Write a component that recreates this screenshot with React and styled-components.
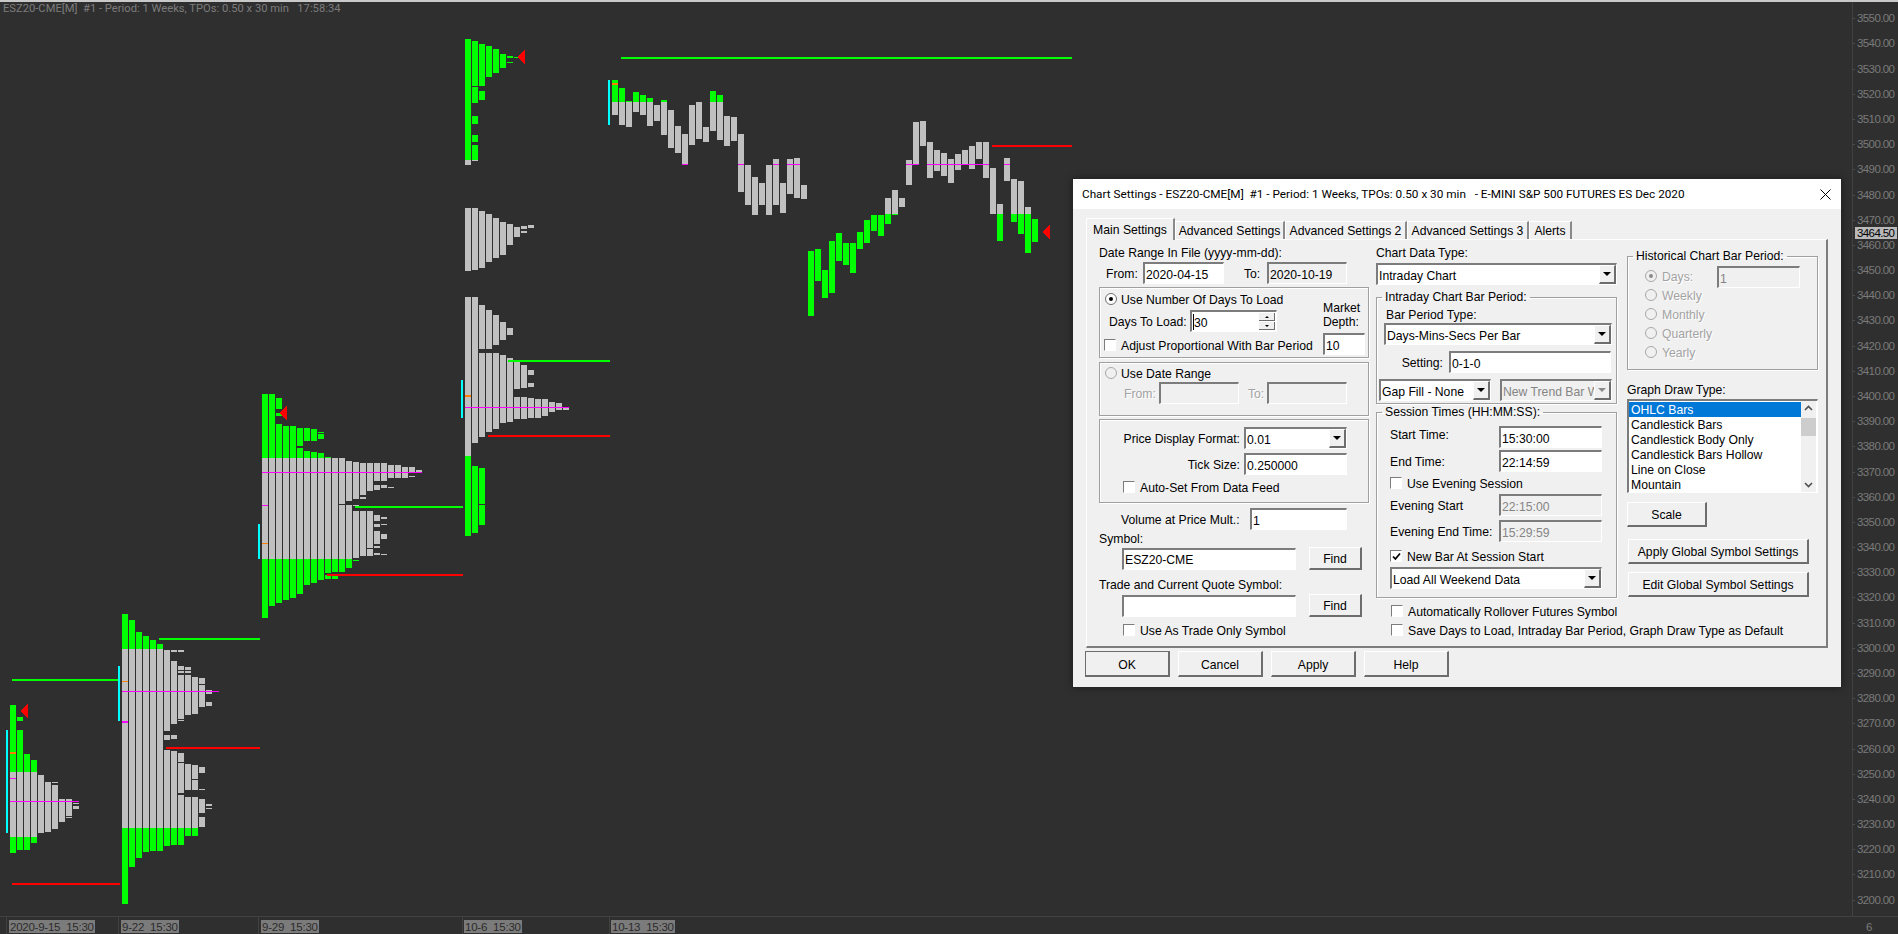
import React from "react";
import styled, { createGlobalStyle } from "styled-components";

const GlobalStyle = createGlobalStyle`
  html, body { margin: 0; padding: 0; background: #2f2f2f; overflow: hidden; }
  * { box-sizing: border-box; }
`;

const UI_FONT = `"Liberation Sans", Arial, sans-serif`;
const COLORS = { g: "#00ff00", s: "#c0c0c0" };

const parseCols = (x0, oy, cols, div = 3) =>
  cols.flatMap((col, i) =>
    col
      .split(" ")
      .filter(Boolean)
      .map((s) => {
        const m = s.match(/([gs])(-?[\d.]+)-(-?[\d.]+)/);
        const a = Math.round(oy + Number(m[2]) / div);
        const b = Math.round(oy + Number(m[3]) / div);
        return { x: x0 + i * 7, y: a, h: Math.max(b - a, 1), c: COLORS[m[1]] };
      })
  );

const bars = [
  ...parseCols(10, 660, [
    "g135-335 s335-531 g531-579",
    "g171-183 g210-335 s335-531 g531-570",
    "g282-335 s335-531 g531-570",
    "g300-335 s335-531 g531-549",
    "s345-519",
    "s366-516",
    "s366-369 s375-507",
    "s417-486",
    "s417-468 s471-474",
    "s429-432 s438-447",
  ]),
  ...parseCols(122, 660, [
    "g-138--33 s-33-504 g504-732",
    "g-120--33 s-33-504 g504-621",
    "g-84--33 s-33-504 g504-594",
    "g-72--33 s-33-504 g504-576",
    "g-60--33 s-33-504 g504-573",
    "g-48--33 s-33-504 g504-573",
    "s-30-213 s225-240 s270-504 g504-558",
    "s-30--24 s3-192 s225-237 s273-504 g504-555",
    "s-30--24 s18-30 s33-39 s45-177 s180-183 s279-306 s309-399 s405-504 g504-555",
    "s21-30 s33-39 s45-165 s312-390 s411-504 g504-528",
    "s51-162 s315-357 s360-390 s411-504 g504-528",
    "s54-72 s75-141 s321-339 s387-390 s417-459 s471-501",
    "s90-102 s126-138 s432-438 s444-447",
  ]),
  ...parseCols(262, 380, [
    "g42-234 s234-537 g537-714",
    "g42-234 s234-537 g537-678",
    "g54-87 g99-108 g132-234 s234-537 g537-669",
    "g138-234 s234-537 g537-660",
    "g138-234 s234-537 g537-654",
    "g144-198 g204-234 s234-537 g537-642",
    "g144-183 g213-234 s234-537 g537-615",
    "g147-183 g216-234 s234-537 g537-609",
    "g156-159 g162-177 g219-234 s234-537 g537-600",
    "g231-234 s234-537 g537-579 g585-597",
    "s234-537 g537-576 g585-597",
    "s234-372 s375-537 g537-576",
    "s243-363 s375-537 g537-564",
    "s246-357 s375-378 s393-534 g540-543",
    "s249-345 s351-357 s393-528",
    "s249-333 s393-504 s507-528",
    "s249-303 s315-330 s405-423 s432-441 s453-492 s498-504 s519-525",
    "s249-303 s315-324 s411-417 s432-435 s462-477 s522-525",
    "s255-294 s321-324",
    "s255-294",
    "s261-294",
    "s261-279 s288-291",
    "s270-279",
  ]),
  ...parseCols(465, 20, [
    "g57-420 s420-435",
    "g63-198 g201-249 g288-312 g345-366 g375-420 s420-423",
    "g72-198 g213-240",
    "g78-171",
    "g87-159",
    "g102-144",
    "g108-114 g126-129",
    "g111-114",
  ]),
  ...parseCols(465, 0, [
    "s208-271", "s208-270", "s211-268", "s214-262", "s218-258", "s222-255", "s224-245", "s227-237", "s226-229 s231-233", "s225-228",
  ], 1),
  ...parseCols(465, 0, [
    "s297-456 g456-536",
    "s297-443 g466-533",
    "s305-349 s353-437 g468-504 g505-525",
    "s310-349 s353-432",
    "s315-345 s353-429",
    "s322-340 s355-423",
    "s328-335 s358-422",
    "s360-389 s397-419",
    "s365-388 s397-419",
    "s370-375 s383-387 s398-418",
    "s399-418",
    "s399-416",
    "s402-412",
    "s403-410",
    "s407-410",
  ], 1),
  ...parseCols(612, 20, [
    "g180-246 s246-285",
    "g204-246 s246-315",
    "g243-246 s246-321",
    "g216-246 s246-276",
    "g225-246 s246-285",
    "g234-246 s246-318",
    "s255-303",
    "g240-246 s246-345",
    "s270-384",
    "s318-399",
    "s342-435",
    "s255-375",
    "s246-357",
    "s321-366",
    "g213-246 s246-333",
    "g225-246 s246-360",
    "s288-378",
    "s291-363",
  ]),
  ...parseCols(738, 0, [
    "s134-192", "s165-205", "s177-215", "s183-205", "s165-215", "s159-205",
    "s183-213", "s159-194", "s158-198", "s185-199",
  ], 1),
  ...parseCols(808, 80, [
    "g513-708", "g507-603", "g570-654", "g483-639", "g459-543", "g489-555", "g489-579", "g456-507",
    "g420-489", "g405-453", "g405-468", "s354-402 g402-432", "s330-402 g402-405", "s354-381",
    "s240-315", "s126-255", "s123-198", "s186-294", "s210-273", "s219-288", "s237-309", "s222-270",
    "s210-255", "s198-267", "s186-237", "s186-294", "s264-402", "s372-402 g402-483", "s234-303",
    "s297-402 g402-426", "s303-402 g402-462", "s381-402 g402-519", "g417-486",
  ]),
];

const lines = [
  [12, 106, 679, 2, "#00ff00"], [12, 108, 883, 2, "#ff0000"], [6, 2, 730, 103, "#00ffff"],
  [166, 94, 747, 2, "#ff0000"], [159, 101, 638, 2, "#00ff00"], [118, 2, 666, 55, "#00ffff"],
  [258, 2, 524, 35, "#00ffff"], [355, 108, 506, 2, "#00ff00"], [327, 136, 574, 2, "#ff0000"],
  [461, 2, 380, 38, "#00ffff"], [508, 102, 360, 2, "#00ff00"], [488, 122, 435, 2, "#ff0000"],
  [608, 2, 80, 45, "#00ffff"], [621, 451, 57, 2, "#00ff00"], [992, 80, 145, 2, "#ff0000"],
  [10, 69, 801, 1, "#ff00ff"], [10, 6, 778, 1, "#ff00ff"], [10, 6, 752, 2, "#ff8000"],
  [122, 97, 691, 1, "#ff00ff"], [122, 6, 721, 2, "#ff00ff"], [122, 6, 681, 1, "#ff8000"],
  [262, 160, 472, 1, "#ff00ff"], [262, 6, 505, 1, "#ff00ff"], [262, 6, 543, 1, "#ff8000"],
  [465, 104, 407, 1, "#ff00ff"], [465, 6, 395, 2, "#ff8000"], [612, 6, 83, 2, "#ff8000"],
  [682, 6, 164, 1, "#ff00ff"], [738, 6, 164, 1, "#ff00ff"], [773, 6, 164, 1, "#ff00ff"],
  [787, 13, 164, 1, "#ff00ff"], [906, 13, 164, 1, "#ff00ff"], [927, 62, 164, 1, "#ff00ff"], [1004, 6, 164, 1, "#ff00ff"],
];

const triangles = [
  [20, 711], [279, 413], [517, 57], [1042, 232],
];

const priceY = (p) => 18.3 + (3550 - p) * 2.518;
const prices = Array.from({ length: 36 }, (_, i) => 3550 - i * 10);

const dateLabels = [
  { x: 9, w: 86, t: "2020-9-15  15:30" },
  { x: 121, w: 58, t: "9-22  15:30" },
  { x: 261, w: 58, t: "9-29  15:30" },
  { x: 464, w: 58, t: "10-6  15:30" },
  { x: 611, w: 64, t: "10-13  15:30" },
];

const Page = styled.div`
  position: relative;
  width: 1898px;
  height: 934px;
  background: #2f2f2f;
  overflow: hidden;
`;

const StatusBar = styled.div`
  height: 18px;
  border-top: 2px solid #c9c9c9;
  padding-left: 3px;
  font: 11.2px/14px Roboto, sans-serif;
  color: #7c7c7c;
  white-space: pre;
`;

const ChartSvg = styled.svg`
  display: block;
  width: 1898px;
  height: 916px;
  overflow: visible;
  font-family: ${UI_FONT};
`;

const Chart = () => (
  <ChartSvg viewBox="0 18 1898 916">
    <g shapeRendering="crispEdges">
      {bars.map((b, i) => (
        <rect key={i} x={b.x} y={b.y} width={6} height={b.h} fill={b.c} />
      ))}
      {lines.map(([x, w, y, h, c], i) => (
        <rect key={i} x={x} y={y} width={w} height={h} fill={c} />
      ))}
      {triangles.map(([x, y], i) => (
        <polygon key={i} points={`${x},${y} ${x + 8},${y - 8} ${x + 8},${y + 8}`} fill="#ff0000" />
      ))}
      <rect x={1852} y={2} width={1} height={914} fill="#414141" />
      <rect x={0} y={916} width={1898} height={1} fill="#414141" />
      {[6, 118, 258, 462, 609].map((x) => (
        <rect key={x} x={x} y={916} width={1} height={18} fill="#414141" />
      ))}
      {prices.map((p) => (
        <rect key={p} x={1852} y={Math.round(priceY(p))} width={3} height={1} fill="#4a4a4a" />
      ))}
      {dateLabels.map((d) => (
        <rect key={d.t} x={d.x} y={920} width={d.w} height={13} fill="#7b7b7b" />
      ))}
      <rect x={1855} y={227} width={42} height={12} fill="#b9b9b9" />
    </g>
    {prices.map((p) => (
      <text key={p} x={1857} y={priceY(p) + 4} fontSize="11.5" fill="#7a7a7a" textLength="38" lengthAdjust="spacing">
        {p}.00
      </text>
    ))}
    <text x={1857} y={237} fontSize="11.5" fill="#000" textLength="38" lengthAdjust="spacing">3464.50</text>
    {dateLabels.map((d) => (
      <text key={d.t} x={d.x + 1} y={931} fontSize="11.5" fill="#2b2b2b" textLength={d.w - 2} lengthAdjust="spacing" xmlSpace="preserve">
        {d.t}
      </text>
    ))}
    <text x={1866} y={931} fontSize="11.5" fill="#7a7a7a">6</text>
  </ChartSvg>
);

/* dialog */
const Dialog = styled.div`
  position: absolute;
  left: 1073px;
  top: 179px;
  width: 768px;
  height: 508px;
  background: #f0f0f0;
  box-shadow: 0 0 0 1px #262626, 0 0 8px rgba(0, 0, 0, 0.45);
  font: 12.2px/14px ${UI_FONT};
  color: #000;
`;

const TitleBar = styled.div`
  height: 30px;
  background: #fff;
  display: flex;
  align-items: center;
  justify-content: space-between;
  padding: 0 10px 0 9px;
  font: 11.75px/16px Roboto, sans-serif;
  white-space: pre;
`;

const CloseIcon = () => (
  <svg width="11" height="11" viewBox="0 0 11 11">
    <path d="M0.5 0.5 L10.5 10.5 M10.5 0.5 L0.5 10.5" stroke="#000" strokeWidth="1" fill="none" />
  </svg>
);

const TabRow = styled.div`
  display: flex;
  align-items: flex-start;
  margin-top: 9px;
  padding-left: 13px;
  height: 21px;
`;

const Tab = styled.div`
  position: relative;
  z-index: ${(p) => (p.$active ? 2 : 1)};
  width: ${(p) => p.$w}px;
  height: ${(p) => (p.$active ? 22 : 18)}px;
  margin-top: ${(p) => (p.$active ? 0 : 3)}px;
  background: #f0f0f0;
  border-top: 1px solid #fff;
  border-left: 1px solid #fff;
  border-right: 2px solid #8a8a8a;
  display: flex;
  align-items: center;
  justify-content: center;
  white-space: nowrap;
`;

const Panel = styled.div`
  margin-left: 13px;
  width: 742px;
  height: 409px;
  border-top: 1px solid #fff;
  border-left: 1px solid #fff;
  border-right: 2px solid #7d7d7d;
  border-bottom: 2px solid #7d7d7d;
  padding: 4px 0 0 12px;
  display: grid;
  grid-template-columns: 270px 241px 194px;
  column-gap: 7px;
`;

const Column = styled.div`
  display: flex;
  flex-direction: column;
  min-width: 0;
  margin-left: ${(p) => p.$ml || 0}px;
`;

const Row = styled.div`
  display: flex;
  align-items: center;
  flex: none;
  height: ${(p) => p.$h || 16}px;
  margin-top: ${(p) => p.$mt || 0}px;
  padding-left: ${(p) => p.$pl || 0}px;
`;

const Text = styled.span`
  flex: none;
  white-space: nowrap;
  padding-top: 2px;
  width: ${(p) => (p.$w ? `${p.$w}px` : "auto")};
  margin-left: ${(p) => p.$ml || 0}px;
  margin-bottom: ${(p) => p.$up || 0}px;
  text-align: ${(p) => (p.$right ? "right" : "left")};
  color: ${(p) => (p.$off ? "#a3a3a3" : "#000")};
  text-shadow: ${(p) => (p.$off ? "1px 1px 0 #fff" : "none")};
`;

const Group = styled.div`
  flex: none;
  height: ${(p) => p.$h}px;
  margin-top: ${(p) => p.$mt || 0}px;
  border: 1px solid #a0a0a0;
  box-shadow: 1px 1px 0 #fff, inset 1px 1px 0 #fff;
`;

const SplitGroup = styled(Group)`
  display: flex;
  justify-content: space-between;
`;

const Stack = styled.div`
  display: flex;
  flex-direction: column;
`;

const DepthStack = styled(Stack)`
  width: 45px;
  padding: 13px 3px 0 0;
  gap: 4px;
`;

const DepthLabel = styled.div`
  line-height: 14px;
`;

const Frame = styled.fieldset`
  flex: none;
  margin: ${(p) => p.$mt || 0}px 0 0;
  padding: 0;
  min-width: 0;
  height: ${(p) => p.$h}px;
  border: 1px solid #a0a0a0;
  box-shadow: 1px 1px 0 #fff, inset 1px 1px 0 #fff;
`;

const FrameTitle = styled.legend`
  margin-left: 5px;
  padding: 0 3px;
  height: 14px;
  line-height: 14px;
  white-space: nowrap;
`;

const Field = styled.div`
  flex: none;
  display: flex;
  align-items: center;
  width: ${(p) => p.$w}px;
  height: 22px;
  margin-left: ${(p) => p.$ml || 0}px;
  margin-top: ${(p) => p.$mt || 0}px;
  background: ${(p) => (p.$off || p.$ro ? "#f0f0f0" : "#fff")};
  color: ${(p) => (p.$off ? "#858585" : "#000")};
  border-style: solid;
  border-width: 2px 1px 1px 2px;
  border-color: #7c7c7c #fff #fff #7c7c7c;
  padding-left: 1px;
  overflow: hidden;
`;

const FieldText = styled.span`
  flex: 1;
  min-width: 0;
  padding-top: 2px;
  overflow: hidden;
  white-space: nowrap;
  border-left: ${(p) => (p.$caret ? "1px solid #000" : "none")};
`;

const ArrowButton = styled.div`
  flex: none;
  width: 17px;
  height: 19px;
  background: #f0f0f0;
  border-style: solid;
  border-width: 1px 2px 2px 1px;
  border-color: #fff #6d6d6d #6d6d6d #fff;
  display: flex;
  align-items: center;
  justify-content: center;
  &::after {
    content: "";
    border-left: 4px solid transparent;
    border-right: 4px solid transparent;
    border-top: 4px solid ${(p) => (p.$off ? "#8a8a8a" : "#000")};
  }
`;

const SpinBox = styled.div`
  flex: none;
  width: 16px;
  display: flex;
  flex-direction: column;
  gap: 1px;
  margin-right: 1px;
`;

const SpinButton = styled.div`
  height: 8px;
  background: #f0f0f0;
  border-right: 1px solid #6d6d6d;
  border-bottom: 1px solid #6d6d6d;
  display: flex;
  align-items: center;
  justify-content: center;
  &::after {
    content: "";
    border-left: 2px solid transparent;
    border-right: 2px solid transparent;
    ${(p) => (p.$up ? "border-bottom: 2px solid #000;" : "border-top: 2px solid #000;")}
  }
`;

const Box = styled.span`
  flex: none;
  width: 12px;
  height: 12px;
  margin-right: 5px;
  background: #fff;
  border-style: solid;
  border-width: 1px;
  border-color: #7c7c7c #fff #fff #7c7c7c;
  display: inline-flex;
  align-items: center;
  justify-content: center;
`;

const CheckMark = () => (
  <svg width="9" height="9" viewBox="0 0 9 9">
    <path d="M1 4.5 L3.4 7 L8 1.5" stroke="#000" strokeWidth="1.8" fill="none" />
  </svg>
);

const Radio = styled.span`
  flex: none;
  width: 12px;
  height: 12px;
  margin-right: ${(p) => p.$mr ?? 4}px;
  border-radius: 50%;
  background: ${(p) => (p.$off ? "#f0f0f0" : "#fff")};
  border: 1px solid ${(p) => (p.$off ? "#a8a8a8" : "#707070")};
  display: inline-flex;
  align-items: center;
  justify-content: center;
  &::after {
    content: "";
    width: 4px;
    height: 4px;
    border-radius: 50%;
    background: ${(p) => (p.$on ? (p.$off ? "#8a8a8a" : "#000") : "transparent")};
  }
`;

const Button = styled.div`
  flex: none;
  width: ${(p) => p.$w}px;
  height: ${(p) => p.$h}px;
  padding-top: 2px;
  margin: ${(p) => p.$mt || 0}px 0 0 ${(p) => p.$ml || 0}px;
  background: #f0f0f0;
  border-style: solid;
  border-width: 1px 2px 2px 1px;
  border-color: ${(p) => (p.$def ? "#6d6d6d" : "#fff")} #6d6d6d #6d6d6d ${(p) => (p.$def ? "#6d6d6d" : "#fff")};
  display: flex;
  align-items: center;
  justify-content: center;
  white-space: nowrap;
`;

const ListBox = styled.div`
  flex: none;
  display: flex;
  width: 191px;
  height: 94px;
  margin-top: 2px;
  background: #fff;
  border-style: solid;
  border-width: 2px 1px 1px 2px;
  border-color: #7c7c7c #fff #fff #7c7c7c;
`;

const ListItems = styled.div`
  flex: 1;
  min-width: 0;
  padding-top: 1px;
`;

const ListItem = styled.div`
  height: 15px;
  line-height: 17px;
  padding-left: 2px;
  white-space: nowrap;
  background: ${(p) => (p.$sel ? "#0078d7" : "transparent")};
  color: ${(p) => (p.$sel ? "#fff" : "#000")};
`;

const ScrollBar = styled.div`
  flex: none;
  width: 15px;
  margin-right: 1px;
  background: #f0f0f0;
  display: flex;
  flex-direction: column;
  align-items: center;
  justify-content: space-between;
`;

const ScrollThumb = styled.div`
  width: 15px;
  height: 18px;
  margin-top: 2px;
  background: #cdcdcd;
`;

const ScrollEnd = styled.svg`
  flex: none;
  width: 15px;
  height: 15px;
`;

const ScrollTop = styled.div`
  display: flex;
  flex-direction: column;
`;

const Footer = styled.div`
  display: flex;
  gap: 8px;
  margin-top: 3px;
  padding-left: 12px;
`;

const Combo = ({ w, text, off, ml, mt }) => (
  <Field $w={w} $off={off} $ml={ml} $mt={mt}>
    <FieldText>{text}</FieldText>
    <ArrowButton $off={off} />
  </Field>
);

const Input = ({ w, text, off, ro, ml, mt }) => (
  <Field $w={w} $off={off} $ro={ro} $ml={ml} $mt={mt}>
    <FieldText>{text}</FieldText>
  </Field>
);

const Check = ({ on, pl, h, mt, children }) => (
  <Row $pl={pl} $h={h} $mt={mt}>
    <Box>{on && <CheckMark />}</Box>
    <Text>{children}</Text>
  </Row>
);

const LeftColumn = () => (
  <Column>
    <Row><Text>Date Range In File (yyyy-mm-dd):</Text></Row>
    <Row $h={22} $mt={2} $pl={7}>
      <Text $w={37}>From:</Text>
      <Input w={81} text="2020-04-15" />
      <Text $w={23} $ml={20}>To:</Text>
      <Input w={80} text="2020-10-19" ro />
    </Row>
    <SplitGroup $h={71} $mt={3}>
      <Stack>
        <Row $mt={3} $pl={5}><Radio $on /><Text>Use Number Of Days To Load</Text></Row>
        <Row $h={22} $mt={3} $pl={9}>
          <Text $w={81}>Days To Load:</Text>
          <Field $w={87}>
            <FieldText $caret>30</FieldText>
            <SpinBox><SpinButton $up /><SpinButton /></SpinBox>
          </Field>
        </Row>
        <Check pl={4} mt={5}>Adjust Proportional With Bar Period</Check>
      </Stack>
      <DepthStack>
        <DepthLabel>Market<br />Depth:</DepthLabel>
        <Input w={42} text="10" />
      </DepthStack>
    </SplitGroup>
    <Group $h={54} $mt={4}>
      <Row $mt={2} $pl={5}><Radio $off /><Text>Use Date Range</Text></Row>
      <Row $h={22} $mt={1} $pl={24}>
        <Text $off $w={35}>From:</Text>
        <Input w={80} off />
        <Text $off $w={19} $ml={9}>To:</Text>
        <Input w={80} off />
      </Row>
    </Group>
    <Group $h={84} $mt={3}>
      <Row $h={22} $mt={7}>
        <Text $right $w={140}>Price Display Format:</Text>
        <Combo w={103} text="0.01" ml={4} />
      </Row>
      <Row $h={22} $mt={4}>
        <Text $right $w={140}>Tick Size:</Text>
        <Input w={103} text="0.250000" ml={4} />
      </Row>
      <Check pl={23} mt={4}>Auto-Set From Data Feed</Check>
    </Group>
    <Row $h={22} $mt={5} $pl={22}>
      <Text $w={129}>Volume at Price Mult.:</Text>
      <Input w={97} text="1" />
    </Row>
    <Row $h={15}><Text>Symbol:</Text></Row>
    <Row $h={23} $mt={2} $pl={23}>
      <Input w={174} text="ESZ20-CME" />
      <Button $w={53} $h={23} $ml={13}>Find</Button>
    </Row>
    <Row $mt={6}><Text>Trade and Current Quote Symbol:</Text></Row>
    <Row $h={23} $mt={2} $pl={23}>
      <Input w={174} />
      <Button $w={53} $h={23} $ml={13}>Find</Button>
    </Row>
    <Check pl={24} mt={5}>Use As Trade Only Symbol</Check>
  </Column>
);

const MiddleColumn = () => (
  <Column>
    <Row><Text>Chart Data Type:</Text></Row>
    <Row $h={22} $mt={3}><Combo w={241} text="Intraday Chart" /></Row>
    <Frame $h={114} $mt={5}>
      <FrameTitle>Intraday Chart Bar Period:</FrameTitle>
      <Row $mt={2} $pl={9}><Text>Bar Period Type:</Text></Row>
      <Row $h={22} $mt={1} $pl={7}><Combo w={228} text="Days-Mins-Secs Per Bar" /></Row>
      <Row $h={22} $mt={6}>
        <Text $right $w={66}>Setting:</Text>
        <Input w={162} text="0-1-0" ml={6} />
      </Row>
      <Row $h={22} $mt={6} $pl={2}>
        <Combo w={112} text="Gap Fill - None" />
        <Combo w={112} text="New Trend Bar W" off ml={9} />
      </Row>
    </Frame>
    <Frame $h={193} $mt={1}>
      <FrameTitle>Session Times (HH:MM:SS):</FrameTitle>
      <Row $h={22} $mt={7} $pl={13}>
        <Text $w={109} $up={6}>Start Time:</Text>
        <Input w={103} text="15:30:00" />
      </Row>
      <Row $h={22} $mt={2} $pl={13}>
        <Text $w={109}>End Time:</Text>
        <Input w={103} text="22:14:59" />
      </Row>
      <Check pl={13} mt={3}>Use Evening Session</Check>
      <Row $h={22} $mt={3} $pl={13}>
        <Text $w={109}>Evening Start</Text>
        <Input w={103} text="22:15:00" off />
      </Row>
      <Row $h={22} $mt={4} $pl={13}>
        <Text $w={109}>Evening End Time:</Text>
        <Input w={103} text="15:29:59" off />
      </Row>
      <Check on pl={13} mt={6}>New Bar At Session Start</Check>
      <Row $h={22} $mt={3} $pl={13}><Combo w={212} text="Load All Weekend Data" /></Row>
    </Frame>
    <Check pl={15} mt={5}>Automatically Rollover Futures Symbol</Check>
    <Check pl={15} mt={3}>Save Days to Load, Intraday Bar Period, Graph Draw Type as Default</Check>
  </Column>
);

const RightColumn = () => (
  <Column $ml={3}>
    <Frame $h={121} $mt={5}>
      <FrameTitle>Historical Chart Bar Period:</FrameTitle>
      <Row $h={19} $mt={3} $pl={17}>
        <Radio $on $off $mr={5} /><Text $off $w={55}>Days:</Text>
        <Input w={83} text="1" off mt={3} />
      </Row>
      {["Weekly", "Monthly", "Quarterly", "Yearly"].map((t) => (
        <Row key={t} $h={19} $pl={17}><Radio $off $mr={5} /><Text $off>{t}</Text></Row>
      ))}
    </Frame>
    <Row $mt={11}><Text>Graph Draw Type:</Text></Row>
    <ListBox>
      <ListItems>
        <ListItem $sel>OHLC Bars</ListItem>
        <ListItem>Candlestick Bars</ListItem>
        <ListItem>Candlestick Body Only</ListItem>
        <ListItem>Candlestick Bars Hollow</ListItem>
        <ListItem>Line on Close</ListItem>
        <ListItem>Mountain</ListItem>
      </ListItems>
      <ScrollBar>
        <ScrollTop>
          <ScrollEnd viewBox="0 0 15 15">
            <path d="M4 9 L7.5 5.5 L11 9" stroke="#505050" strokeWidth="1.6" fill="none" />
          </ScrollEnd>
          <ScrollThumb />
        </ScrollTop>
        <ScrollEnd viewBox="0 0 15 15">
          <path d="M4 6 L7.5 9.5 L11 6" stroke="#505050" strokeWidth="1.6" fill="none" />
        </ScrollEnd>
      </ScrollBar>
    </ListBox>
    <Button $w={80} $h={25} $mt={9}>Scale</Button>
    <Button $w={181} $h={25} $mt={12} $ml={1}>Apply Global Symbol Settings</Button>
    <Button $w={181} $h={25} $mt={8} $ml={1}>Edit Global Symbol Settings</Button>
  </Column>
);

export default function App() {
  return (
    <Page>
      <GlobalStyle />
      <StatusBar>{"ESZ20-CME[M]  #1 - Period: 1 Weeks, TPOs: 0.50 x 30 min   17:58:34"}</StatusBar>
      <Chart />
      <Dialog>
        <TitleBar>
          <span>{"Chart Settings - ESZ20-CME[M]  #1 - Period: 1 Weeks, TPOs: 0.50 x 30 min   - E-MINI S&P 500 FUTURES ES Dec 2020"}</span>
          <CloseIcon />
        </TitleBar>
        <TabRow>
          <Tab $active $w={89}>Main Settings</Tab>
          <Tab $w={110}>Advanced Settings</Tab>
          <Tab $w={122}>Advanced Settings 2</Tab>
          <Tab $w={122}>Advanced Settings 3</Tab>
          <Tab $w={43}>Alerts</Tab>
        </TabRow>
        <Panel>
          <LeftColumn />
          <MiddleColumn />
          <RightColumn />
        </Panel>
        <Footer>
          <Button $w={85} $h={26} $def>OK</Button>
          <Button $w={85} $h={26}>Cancel</Button>
          <Button $w={85} $h={26}>Apply</Button>
          <Button $w={85} $h={26}>Help</Button>
        </Footer>
      </Dialog>
    </Page>
  );
}
